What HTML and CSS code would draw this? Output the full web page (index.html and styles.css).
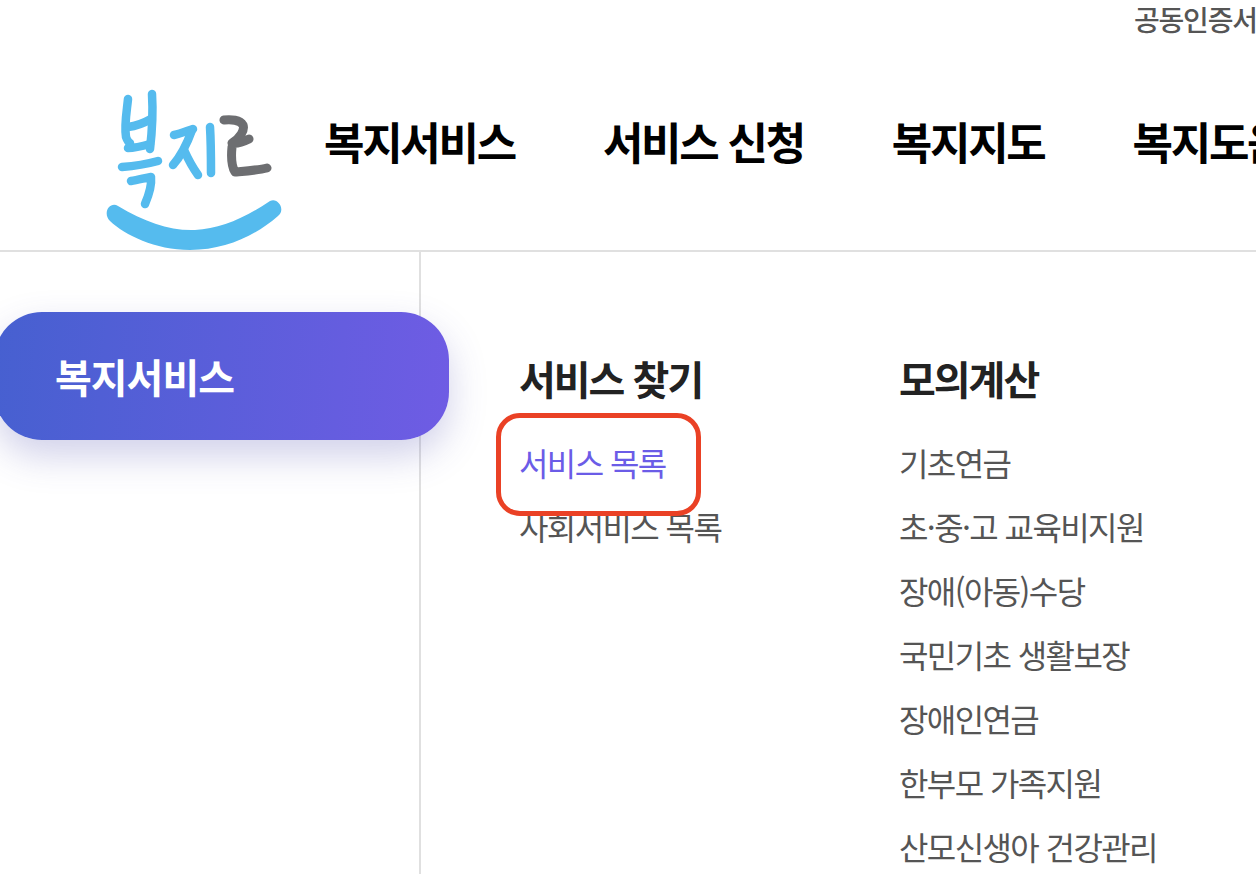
FILE: index.html
```html
<!DOCTYPE html>
<html lang="ko">
<head>
    <meta charset="UTF-8">
    <title>복지로</title>
    <link rel="stylesheet" href="styles.css">
</head>
<body>
<div class="page">
    <header class="header">
        <div class="util">공동인증서</div>
        <div class="header-main">
            <svg class="logo" viewBox="0 0 210 190" width="210" height="190" fill="none" stroke-linecap="round" stroke-linejoin="round" aria-label="복지로">
                <g stroke="#55bbee" stroke-width="8.5">
                    <path d="M38 29C37 40 34 55 36 67C37 70 38 72 40 73"/>
                    <path d="M62 24C63 40 62 62 60 79"/>
                    <path d="M38 57C46 56 54 53 61 49"/>
                    <path d="M38 78C46 78 53 76 60 74"/>
                    <path d="M32 97C45 96 57 94 68 91"/>
                    <path d="M41 111C48 110 55 108 61 107C62 117 58 127 55 134"/>
                    <path d="M84 65C90 64 97 61 103 59"/>
                    <path d="M102 60C97 74 90 87 83 95"/>
                    <path d="M94 80C98 89 103 98 108 105"/>
                    <path d="M120 57C121 73 121 89 121 103"/>
                </g>
                <path d="M134 50C141 49 150 50 153 55C155 60 150 68 142 73C148 74 155 71 159 69M142 77C141 87 142 97 145 102C156 101 169 100 177 98" stroke="#6d6e71" stroke-width="9"/>
                <path d="M28 136C55 152 80 161 105 160C130 159 155 148 180 131C188 127 196 140 188 146C165 166 135 180 100 180C65 180 35 165 20 151C12 143 20 131 28 136Z" fill="#55bbee"/>
            </svg>
            <nav class="gnb">
                <a>복지서비스</a>
                <a>서비스 신청</a>
                <a>복지지도</a>
                <a>복지도움</a>
            </nav>
        </div>
    </header>

    <div class="menu">
        <aside class="side">
            <div class="side-pill">복지서비스</div>
        </aside>
        <div class="cols">
            <section class="col col-find">
                <h3>서비스 찾기</h3>
                <ul>
                    <li class="active">서비스 목록</li>
                    <li>사회서비스 목록</li>
                </ul>
            </section>
            <section class="col">
                <h3>모의계산</h3>
                <ul>
                    <li>기초연금</li>
                    <li>초·중·고 교육비지원</li>
                    <li>장애(아동)수당</li>
                    <li>국민기초 생활보장</li>
                    <li>장애인연금</li>
                    <li>한부모 가족지원</li>
                    <li>산모신생아 건강관리</li>
                </ul>
            </section>
        </div>
    </div>

    <div class="callout"></div>
</div>
</body>
</html>
```

FILE: styles.css
```css
html, body { margin: 0; padding: 0; background: #fff; }
body { font-family: "Noto Sans CJK KR", "Noto Sans", sans-serif; }
.page { position: relative; width: 1256px; height: 874px; overflow: hidden; }

.header { height: 250px; border-bottom: 2px solid #e0e0e0; white-space: nowrap; }
.util { height: 70px; padding-left: 1134px; box-sizing: border-box; font-size: 28px; font-weight: 500; line-height: 38px; color: #555; letter-spacing: -1.2px; }
.header-main { display: flex; align-items: flex-start; height: 180px; padding-left: 90px; }
.logo { display: block; flex: none; }
.gnb { display: flex; gap: 88px; margin: 41px 0 0 24px; }
.gnb a { font-size: 44px; font-weight: 700; line-height: 60px; letter-spacing: -2.3px; color: #000; }

.menu { display: flex; height: 622px; }
.side { flex: none; width: 419px; border-right: 2px solid #e0e0e0; padding-top: 60px; }
.side-pill {
    width: 455px; height: 128px; margin-left: -6px; padding-left: 61px; box-sizing: border-box;
    border-radius: 48px;
    background: linear-gradient(95deg, #4660d0, #6f5ce4);
    box-shadow: 0 16px 36px rgba(70, 70, 170, 0.25);
    font-size: 40px; font-weight: 700; line-height: 128px; letter-spacing: -1px; color: #fff;
}

.cols { display: flex; padding: 96px 0 0 98px; white-space: nowrap; }
.col-find { width: 380px; }
.col h3 { margin: 0 0 22px; font-size: 40px; font-weight: 700; line-height: 60px; letter-spacing: -2px; color: #222; }
.col ul { list-style: none; margin: 0; padding: 0; }
.col li { height: 64px; font-size: 32px; line-height: 64px; letter-spacing: -1.6px; color: #555; }
.col li.active { color: #6b5ce7; }

.callout { position: absolute; left: 496px; top: 413px; width: 205px; height: 103px; box-sizing: border-box; border: 5px solid #ea4125; border-radius: 24px; }
```
